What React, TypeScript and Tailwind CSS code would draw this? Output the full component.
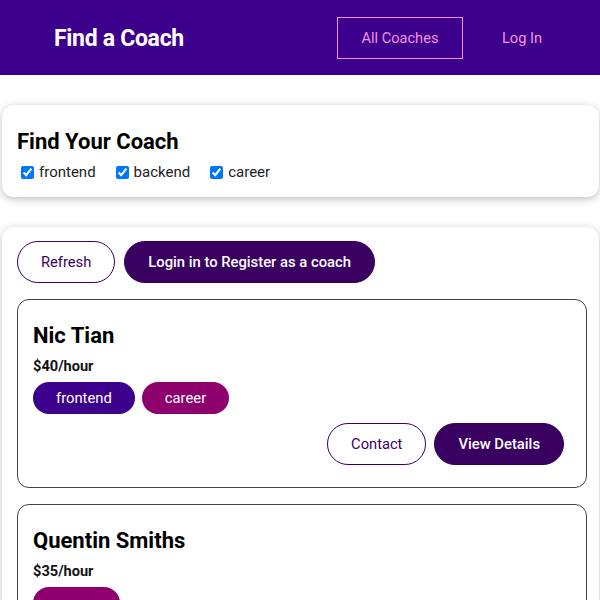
import {useState} from "react"

type Coach = {
    id: string
    name: string
    rate: number
    areas: string[]
}

const coaches: Coach[] = [
    {id: "c1", name: "Nic Tian", rate: 40, areas: ["frontend", "career"]},
    {id: "c2", name: "Quentin Smiths", rate: 35, areas: ["career"]},
]

const badgeColor: Record<string, string> = {
    frontend: "bg-[#3d008d]",
    backend: "bg-[#71008d]",
    career: "bg-[#8d006e]",
}

function Badge({area}: {area: string}) {
    return (
        <span className={`${badgeColor[area]} inline-block text-white rounded-[30px] px-[23px] h-[32px] leading-[32px] text-[14.8px]`}>
            {area}
        </span>
    )
}

function OutlineButton({children}: {children: string}) {
    return (
        <button className="h-[42px] px-[23px] rounded-[30px] border border-[#3a0061] text-[#3a0061] text-[14.7px] bg-white">
            {children}
        </button>
    )
}

function SolidButton({children}: {children: string}) {
    return (
        <button className="h-[42px] px-[23px] rounded-[30px] border border-[#3a0061] bg-[#3a0061] text-white text-[14.8px] font-medium">
            {children}
        </button>
    )
}

function CoachItem({coach}: {coach: Coach}) {
    return (
        <li className="border border-[#424242] rounded-[12px] px-[15px] pt-[15px] pb-[22px] mt-[16px]">
            <h3 className="mt-[8px] text-[22px] leading-[26px] font-bold text-black">{coach.name}</h3>
            <h4 className="mt-[7px] text-[14.6px] leading-[20px] font-bold text-[#111]">${coach.rate}/hour</h4>
            <div className="mt-[6px] flex gap-[7px]">
                {coach.areas.map(a => <Badge key={a} area={a}/>)}
            </div>
            <div className="mt-[9px] mr-[7px] flex justify-end gap-[8px]">
                <OutlineButton>Contact</OutlineButton>
                <SolidButton>View Details</SolidButton>
            </div>
        </li>
    )
}

export default function App() {
    const [filters, setFilters] = useState({frontend: true, backend: true, career: true})

    return (
        <div className="min-h-[600px] bg-white font-['Roboto',sans-serif] overflow-hidden">
            <header className="h-[75px] bg-[#3d008d] flex items-center">
                <nav className="w-[540px] mx-auto flex justify-between items-center">
                    <h1 className="text-white text-[23px] font-bold pl-[24px] mt-[3px] tracking-[-0.3px]">Find a Coach</h1>
                    <ul className="flex items-center mr-[4px]">
                        <li className="mx-[7px]">
                            <a className="inline-block w-[126px] h-[42px] leading-[40px] text-center border border-[#f391e3] text-[#f391e3] text-[14.6px]">All Coaches</a>
                        </li>
                        <li className="mx-[7px]">
                            <a className="inline-block h-[42px] leading-[40px] px-[24px] border border-transparent text-[#f391e3] text-[14.6px] mr-[-8px]">Log In</a>
                        </li>
                    </ul>
                </nav>
            </header>

            <section className="ml-[2px] w-[597px] mt-[30px] rounded-[12px] shadow-[0_2px_8px_rgba(0,0,0,0.26)] p-[15px]">
                <h2 className="mt-[9px] text-[22px] leading-[26px] font-bold text-black">Find Your Coach</h2>
                <div className="mt-[7px] flex items-center h-[20px] leading-[20px] text-[15px] text-[#222]">
                    {(["frontend", "backend", "career"] as const).map(f => (
                        <label key={f} className="flex items-center ml-[4px] mr-[16px]">
                            <input
                                type="checkbox"
                                checked={filters[f]}
                                onChange={() => setFilters({...filters, [f]: !filters[f]})}
                                className="w-[13px] h-[13px] mr-[5px]"
                            />
                            {f}
                        </label>
                    ))}
                </div>
            </section>

            <section className="ml-[2px] w-[597px] mt-[30px] rounded-[12px] shadow-[0_2px_8px_rgba(0,0,0,0.26)] pl-[15px] pr-[12px] pt-[14px] pb-[15px]">
                <div className="flex gap-[9px]">
                    <OutlineButton>Refresh</OutlineButton>
                    <SolidButton>Login in to Register as a coach</SolidButton>
                </div>
                <ul>
                    {coaches.map(c => <CoachItem key={c.id} coach={c}/>)}
                </ul>
            </section>
        </div>
    )
}
